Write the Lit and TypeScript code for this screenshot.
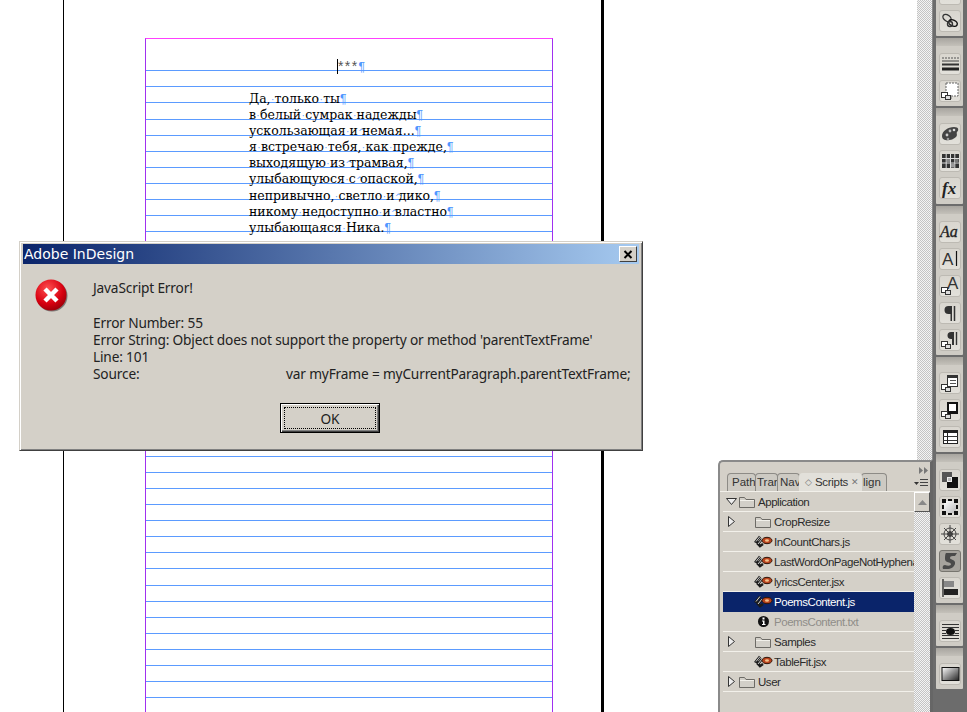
import { LitElement, html, css, svg } from "lit";
import { customElement } from "lit/decorators.js";

const POEM: string[] = [
  "Да, только ты",
  "в белый сумрак надежды",
  "ускользающая и^немая...",
  "я встречаю тебя, как прежде,",
  "выходящую из^трамвая,",
  "улыбающуюся с^опаской,",
  "непривычно, светло и^дико,",
  "никому недоступно и^властно",
  "улыбающаяся Ника.",
];

const smallSquares = svg`<rect x="2.500" y="12.500" width="6" height="5" fill="#fff" stroke="#333"/><rect x="6.500" y="15.500" width="5" height="4" fill="#ddd" stroke="#333"/>`;

const DOCK: { pressed?: boolean; icon: unknown }[][] = [
  [
    { icon: svg`<path d="M5 8h12l-6 9z" fill="#333"/>` },
    { icon: svg`<g fill="none" stroke="#333" stroke-width="1.400"><ellipse cx="8" cy="8" rx="4.500" ry="3" transform="rotate(35 8 8)"/><ellipse cx="14" cy="13" rx="4.500" ry="3" transform="rotate(25 14 13)" stroke="#111"/><circle cx="11" cy="14" r="2.500"/></g>` },
  ],
  [
    { icon: svg`<path d="M3 5h17" stroke="#555" stroke-dasharray="2 1"/><path d="M3 8h17" stroke="#444"/><path d="M3 11.500h17" stroke="#333" stroke-width="2"/><path d="M3 16h17" stroke="#222" stroke-width="3"/>` },
    { icon: svg`<path d="M7 3h12v13h-7v3h-5z" fill="#fff" stroke="#666" stroke-dasharray="2 1"/>${smallSquares}` },
  ],
  [
    { icon: svg`<path d="M3 13c0-5 6-9 12-9 5 0 5 3 3 5-1 1 1 3-1 5-4 4-14 5-14-1z" fill="#444"/><circle cx="8" cy="12" r="1.400" fill="#ccc"/><circle cx="11" cy="8" r="1.400" fill="#bbb"/><circle cx="15" cy="7" r="1.300" fill="#ddd"/><circle cx="9" cy="16" r="1.300" fill="#999"/>` },
    { icon: svg`<rect x="3" y="4" width="17" height="14" fill="#333"/><path d="M3 8.500h17M3 13h17M7.200 4v14M11.500 4v14M15.800 4v14" stroke="#ddd"/><rect x="8" y="9" width="3" height="3.500" fill="#888"/><rect x="12" y="13.500" width="3" height="4" fill="#999"/><rect x="16" y="9" width="3.500" height="3.500" fill="#777"/>` },
    { icon: svg`<text x="3" y="17" class="it">fx</text>` },
  ],
  [
    { icon: svg`<text x="1" y="16" class="it sm">Aa</text>` },
    { icon: svg`<text x="3" y="17" class="sa">A</text><path d="M17.500 3v15" stroke="#111" stroke-width="1.200"/>` },
    { icon: svg`<text x="8" y="14" class="sa">A</text>${smallSquares}` },
    { icon: svg`<path d="M13 4h-3.500a3.500 3.500 0 0 0 0 8h2v7H13z" fill="#333"/><path d="M15.500 4v15" stroke="#333" stroke-width="1.500"/>` },
    { icon: svg`<path d="M15 3h-3a3 3 0 0 0 0 7h1v6h2z" fill="#333"/><path d="M17.500 3v13" stroke="#333" stroke-width="1.400"/>${smallSquares}` },
  ],
  [
    { icon: svg`<rect x="8.500" y="3.500" width="10" height="11" fill="#fff" stroke="#333"/><path d="M8 5h11" stroke="#333" stroke-width="2"/><path d="M11 8.500h6M11 11.500h6" stroke="#555"/>${smallSquares}` },
    { icon: svg`<rect x="8" y="3" width="11" height="12" fill="#111"/><rect x="10" y="5" width="7" height="7" fill="#fff"/>${smallSquares}` },
    { icon: svg`<rect x="4.500" y="4.500" width="14" height="13" fill="#fff" stroke="#222"/><path d="M4 5.500h15" stroke="#222" stroke-width="3"/><path d="M4 10.500h15M4 14.500h15" stroke="#333"/><path d="M8.500 4v14" stroke="#222"/>` },
  ],
  [
    { icon: svg`<rect x="3" y="3" width="10" height="10" fill="#555"/><rect x="8" y="8" width="11" height="11" fill="#111"/><rect x="8.500" y="8.500" width="4" height="4" fill="#bbb" stroke="#eee"/>` },
    { icon: svg`<defs><linearGradient id="w" x1="0" y1="0" x2="1" y2="1"><stop offset="0" stop-color="#fff"/><stop offset="1" stop-color="#bbb"/></linearGradient></defs><rect x="5" y="5" width="12" height="12" fill="url(#w)"/><path d="M3 3h4v4H3zM9 3h4v2H9zM15 3h4v4h-4zM3 9h2v4H3zM17 9h2v4h-2zM3 15h4v4H3zM9 17h4v2H9zM15 15h4v4h-4z" fill="#111"/>` },
    { icon: svg`<g stroke="#444" fill="none"><circle cx="11" cy="11" r="6"/><circle cx="11" cy="11" r="2.500" fill="#333"/><path d="M11 2v18M2 11h18M5 5l12 12M17 5L5 17"/></g>` },
    { pressed: true, icon: svg`<path d="M7 3h11l-2 3c-3 0-5 0-5 2s6 1 5 6c-1 3-4 5-8 5H4c-1-2 0-4 2-4 3 1 6 1 6-1s-6-1-6-5c0-2 0-5 1-6z" fill="#4a4a4a"/>` },
    { icon: svg`<path d="M4 2v18" stroke="#222" stroke-width="1.300"/><rect x="5" y="4" width="10" height="6" fill="#888"/><rect x="5" y="12" width="14" height="6" fill="#222"/>` },
  ],
  [
    { icon: svg`<path d="M3 4.500h17M3 7.500h17M3 15.500h17M3 18.500h17M3 10.500h4M16 10.500h4M3 13.500h4M16 13.500h4" stroke="#333"/><ellipse cx="11.500" cy="11.500" rx="4.500" ry="3.500" fill="#111"/>` },
  ],
  [
    { icon: svg`<defs><linearGradient id="g" x1="0" y1="0" x2="1" y2="1"><stop offset="0" stop-color="#fff"/><stop offset="1" stop-color="#222"/></linearGradient></defs><rect x="3" y="4.500" width="17" height="13" fill="url(#g)" stroke="#111"/>` },
  ],
];

type Row = { kind: "folder" | "script" | "info"; label: string; depth: 0 | 1; arrow?: "open" | "closed"; selected?: boolean; muted?: boolean };
const ROWS: Row[] = [
  { kind: "folder", label: "Application", depth: 0, arrow: "open" },
  { kind: "folder", label: "CropResize", depth: 1, arrow: "closed" },
  { kind: "script", label: "InCountChars.js", depth: 1 },
  { kind: "script", label: "LastWordOnPageNotHyphenated.jsx", depth: 1 },
  { kind: "script", label: "lyricsCenter.jsx", depth: 1 },
  { kind: "script", label: "PoemsContent.js", depth: 1, selected: true },
  { kind: "info", label: "PoemsContent.txt", depth: 1, muted: true },
  { kind: "folder", label: "Samples", depth: 1, arrow: "closed" },
  { kind: "script", label: "TableFit.jsx", depth: 1 },
  { kind: "folder", label: "User", depth: 0, arrow: "closed" },
];

const folderIcon = html`<svg width="16" height="12" viewBox="0 0 16 12"><path d="M.5 11.500V1.500h5l1.500 2h8.500v8z" fill="#d2cfc8" stroke="#6d6b66"/><path d="M1 4.500h14" stroke="#f2f0ea"/></svg>`;
const scriptIcon = html`<svg width="19" height="13" viewBox="0 0 19 13"><g fill="none"><g stroke="#1c1c1c" stroke-width="2.600"><path d="M6 1.500L2 6.500l2 1M8 4L4 9l2 2 3-2"/></g><g stroke="#e4e4e4" stroke-width="0.900"><path d="M6 1.500L2 6.500M8 4L4 9"/></g></g><ellipse cx="13" cy="5.500" rx="5" ry="3.200" fill="#b8421c" stroke="#2e1408"/><ellipse cx="13" cy="5.500" rx="2" ry="1.200" fill="#f3c089"/></svg>`;
const infoIcon = html`<svg width="13" height="13" viewBox="0 0 13 13"><circle cx="6.500" cy="6.500" r="5.500" fill="#111"/><path d="M5.500 2.500h2v2h-2zM5 5.500h2.500V9h1v1H5V9h1V6.500H5z" fill="#fff"/></svg>`;

@customElement("app-root")
export class AppRoot extends LitElement {
  static styles = css`
    :host { display: block; width: 967px; height: 712px; position: relative; overflow: hidden; background: #fff; }
    .shell { display: flex; height: 712px; }
    .workspace { width: 917px; flex: none; overflow: hidden; padding-left: 63px; box-sizing: border-box; }
    .page { width: 541px; height: 712px; box-sizing: border-box; border-left: 1px solid #000; border-right: 3px solid #000; padding: 38px 49px 0 81px; background: #fff; }
    .frame { position: relative; height: 674px; width: 408px; box-sizing: border-box; border-left: 1px solid #a030f0; border-right: 1px solid #a030f0; border-top: 1px solid #ff40ff; }
    .guides { position: absolute; left: 0; top: -39px; width: 406px; height: 712px; }
    .guides path { stroke: #5b9bff; stroke-width: 1; fill: none; shape-rendering: crispEdges; }
    .story { position: relative; font: 12.500px/16.070px "DejaVu Serif", serif; color: #000; white-space: nowrap; padding-top: 19px; }
    .title { padding-left: 191px; height: 33.140px; color: #555; font-family: "Liberation Sans", sans-serif; font-size: 14px; letter-spacing: 1.400px; line-height: 16px; }
    .caret { display: inline-block; width: 1px; height: 15px; background: #000; vertical-align: -3px; }
    .poem { padding-left: 103px; }
    .poem > div { height: 16.070px; }
    .pil { color: #4f97ff; font-family: "Liberation Sans", sans-serif; font-size: 12px; letter-spacing: 0; }
    .sp { color: #4f97ff; display: inline-block; width: 4px; text-align: center; font-size: 9px; overflow: visible; }
    .strip { width: 15px; flex: none; background: repeating-conic-gradient(#c4c4c4 0 25%, #f4f4f4 0 50%) 0 0 / 2px 2px; }
    .dock { width: 35px; flex: none; box-sizing: border-box; background: #6c6c6c; padding: 0 4px 0 3px; border-left: 1px solid #8a8a8a; overflow: hidden; }
    .group { background: #cfccc5; display: flex; flex-direction: column; align-items: center; margin-bottom: 2px; width: 27px; border-radius: 1px; padding: 0 0 4px 1px; box-sizing: border-box; }
    .group:nth-child(3) { padding-bottom: 5px; }
    .group.first { margin-top: -17px; }
    .grip { width: calc(100% + 1px); margin-left: -1px; height: 8px; flex: none; background: linear-gradient(#a8a59f, #c4c1ba); margin-bottom: 7px; }
    .group.first .grip { display: none; }
    .tool { width: 22px; height: 22px; flex: none; margin-bottom: 5px; box-sizing: border-box; border-radius: 3px; background: linear-gradient(#d9d6cf, #e2e0da); border: 1px solid #bdbab3; }
    .tool:last-child { margin-bottom: 0; }
    .tool.pressed { background: #a6a39d; border-color: #77756f; }
    .tool svg { display: block; margin: -1px; width: 22px; height: 22px; overflow: hidden; }
    .it { font: italic 700 17px "Liberation Serif", serif; fill: #222; }
    .it.sm { font-size: 16px; font-weight: 400; stroke: #222; stroke-width: 0.300px; }
    .sa { font: 400 17px "Liberation Sans", sans-serif; fill: #333; }

    .dialog { position: absolute; left: 19px; top: 241px; width: 624px; height: 210px; box-sizing: border-box; background: #d4d0c8; border: 1px solid; border-color: #d4d0c8 #404040 #404040 #d4d0c8; box-shadow: inset 1px 1px 0 #fff, inset -1px -1px 0 #808080; padding: 2px 3px; font: 13.700px/17px "Noto Sans", sans-serif; letter-spacing: -0.165px; color: #222; display: flex; flex-direction: column; }
    .titlebar { height: 20px; flex: none; display: flex; align-items: center; justify-content: space-between; background: linear-gradient(90deg, #0a246a, #a6caf0); padding: 0 2px 0 1px; color: #fff; font: 14px "DejaVu Sans", sans-serif; letter-spacing: 0; }
    .close { width: 16px; height: 14px; display: flex; background: #d4d0c8; border: 1px solid; border-color: #fff #404040 #404040 #fff; align-items: center; justify-content: center; }
    .dbody { flex: 1; display: flex; padding: 15px 0 0 12px; }
    .erricon { width: 33px; height: 33px; margin-right: 25px; flex: none; }
    .msgs { white-space: nowrap; }
    .msgs .gap { height: 18px; }
    .src { display: flex; }
    .src b { font-weight: 400; width: 193px; }
    .actions { display: flex; justify-content: center; padding: 0 2px 15px 0; }
    .ok { width: 100px; height: 30px; box-sizing: border-box; background: #d4d0c8; border: 1px solid #000; box-shadow: inset 1px 1px 0 #fff, inset -1px -1px 0 #404040, inset -2px -2px 0 #808080; display: flex; padding: 3px; font: inherit; color: inherit; letter-spacing: inherit; }
    .ok span { flex: 1; border: 1px dotted #000; display: flex; align-items: center; justify-content: center; }

    .panel { position: absolute; left: 718px; top: 460px; width: 215px; height: 252px; box-sizing: border-box; background: #d4d0c8; border-left: 2px solid #8a8a8a; border-top: 2px solid #8a8a8a; border-right: 3px solid #666; border-top-left-radius: 5px; display: flex; flex-direction: column; font: 11.500px "Liberation Sans", sans-serif; letter-spacing: -0.450px; color: #2a2a2a; }
    .tabhead { height: 30px; flex: none; display: flex; align-items: flex-end; padding-left: 7px; position: relative; border-bottom: 1px solid #f2f0ea; box-sizing: border-box; }
    .tab { height: 18px; box-sizing: border-box; border: 1px solid #8d8b86; border-bottom: 0; border-radius: 4px 4px 0 0; background: #cdcac3; padding-left: 4px; overflow: hidden; white-space: nowrap; line-height: 17px; margin-right: -1px; color: #333; flex: none; letter-spacing: 0; }
    .tab.t2 { padding-left: 1px; width: 23px; }
    .tab.t3 { padding-left: 2px; width: 23px; }
    .tab.t1 { width: 29px; }
    .tab.active { background: #e2e0da; border-color: #e2e0da; display: flex; align-items: center; gap: 3px; padding-left: 5px; z-index: 1; width: 63px; letter-spacing: -0.300px; }
    .tab.active i { font-style: normal; color: #777; font-size: 9px; letter-spacing: 0; }
    .tab.t5 { width: 26px; padding-left: 1px; }
    .flyout { position: absolute; right: 1px; top: 5px; display: flex; flex-direction: column; align-items: flex-end; gap: 5px; }
    .body { flex: 1; display: flex; }
    .tree { width: 191px; margin-left: 3px; flex: none; }
    .row { height: 20px; box-sizing: border-box; border-bottom: 1px solid #f2f0ea; display: flex; align-items: center; overflow: hidden; white-space: nowrap; }
    .row.sel { background: #0a246a; color: #fff; border-bottom-color: #0a246a; }
    .row.muted { color: #8f8d88; }
    .arrow { width: 16px; flex: none; display: flex; justify-content: center; }
    .row .ic { flex: none; display: flex; }
    .row.d0 .ic { width: 19px; }
    .row.d1 .ic { margin-left: 13px; width: 22px; justify-content: center; }
    .scroll { flex: 1; background: repeating-conic-gradient(#c4c4c4 0 25%, #f4f4f4 0 50%) 0 0 / 2px 2px; }
    .sbtn { height: 20px; box-sizing: border-box; background: #d4d0c8; border: 1px solid; border-color: #fff #555 #555 #fff; display: flex; align-items: center; justify-content: center; }
  `;

  private renderLine(line: string) {
    const parts = line.split(/( |\^)/);
    return parts.map((p) =>
      p === " " ? html`<span class="sp">·</span>` : p === "^" ? html`<span class="sp">^</span>` : p
    );
  }

  render() {
    const ys: number[] = [];
    for (let i = 0; i < 40; i++) ys.push(Math.round(70.3 + i * 16.07) + 0.5);
    return html`
      <div class="shell">
        <div class="workspace">
          <div class="page">
            <div class="frame">
              <svg class="guides" viewBox="0 0 406 712"><path d=${ys.map((y) => `M0 ${y}h406`).join("")} /></svg>
              <div class="story">
                <div class="title"><span class="caret"></span>***<span class="pil">¶</span></div>
                <div class="poem">
                  ${POEM.map((l) => html`<div>${this.renderLine(l)}<span class="pil">¶</span></div>`)}
                </div>
              </div>
            </div>
          </div>
        </div>
        <div class="strip"></div>
        <div class="dock">
          ${DOCK.map(
            (g, i) => html`<div class="group ${i === 0 ? "first" : ""}">
              <div class="grip"></div>
              ${g.map(
                (t) => html`<div class="tool ${t.pressed ? "pressed" : ""}"><svg viewBox="0 0 22 22">${t.icon}</svg></div>`
              )}
            </div>`
          )}
        </div>
      </div>

      <div class="panel">
        <div class="tabhead">
          <div class="tab t1">Paths</div>
          <div class="tab t2">Trans</div>
          <div class="tab t3">Nav</div>
          <div class="tab active"><i>◇</i>Scripts<i>✕</i></div>
          <div class="tab t5">lign</div>
          <div class="flyout">
            <svg width="10" height="7" viewBox="0 0 10 7"><path d="M0 0l4 3.500L0 7zM5 0l4 3.500L5 7z" fill="#777"/></svg>
            <svg width="15" height="8" viewBox="0 0 15 8"><path d="M0 3h5L2.500 6z" fill="#333"/><path d="M6 .5h8M6 3.500h8M6 6.500h8" stroke="#444"/></svg>
          </div>
        </div>
        <div class="body">
          <div class="tree">
            ${ROWS.map(
              (r) => html`<div class="row d${r.depth} ${r.selected ? "sel" : ""} ${r.muted ? "muted" : ""}">
                <span class="arrow">
                  ${r.arrow === "open"
                    ? html`<svg width="11" height="7" viewBox="0 0 11 7"><path d="M.5.500h10L5.500 6.500z" fill="#eee" stroke="#333"/></svg>`
                    : r.arrow === "closed"
                    ? html`<svg width="7" height="11" viewBox="0 0 7 11"><path d="M.5.500v10L6.500 5.500z" fill="#eee" stroke="#333"/></svg>`
                    : ""}
                </span>
                <span class="ic">${r.kind === "folder" ? folderIcon : r.kind === "script" ? scriptIcon : infoIcon}</span>
                <span class="label">${r.label}</span>
              </div>`
            )}
          </div>
          <div class="scroll">
            <div class="sbtn"><svg width="9" height="5" viewBox="0 0 9 5"><path d="M0 5L4.500 0 9 5z" fill="#888"/></svg></div>
          </div>
        </div>
      </div>

      <div class="dialog">
        <div class="titlebar">
          <span>Adobe InDesign</span>
          <span class="close"><svg width="10" height="9" viewBox="0 0 10 9"><path d="M1.500 1l7 7M8.500 1l-7 7" stroke="#000" stroke-width="2"/></svg></span>
        </div>
        <div class="dbody">
          <svg class="erricon" viewBox="0 0 33 33">
            <defs>
              <radialGradient id="er" cx="0.400" cy="0.300" r="0.800"><stop offset="0" stop-color="#ff5050"/><stop offset="0.600" stop-color="#d80010"/><stop offset="1" stop-color="#8a0008"/></radialGradient>
            </defs>
            <circle cx="17" cy="17" r="15.500" fill="#555" opacity="0.700"/>
            <circle cx="16" cy="16" r="15.500" fill="url(#er)"/>
            <path d="M10 10l12 12M22 10L10 22" stroke="#fff" stroke-width="4.500"/>
          </svg>
          <div class="msgs">
            <div>JavaScript Error!</div>
            <div class="gap"></div>
            <div>Error Number: 55</div>
            <div>Error String: Object does not support the property or method 'parentTextFrame'</div>
            <div>Line: 101</div>
            <div class="src"><b>Source:</b><span>var myFrame = myCurrentParagraph.parentTextFrame;</span></div>
          </div>
        </div>
        <div class="actions"><button class="ok"><span>OK</span></button></div>
      </div>
    `;
  }
}
